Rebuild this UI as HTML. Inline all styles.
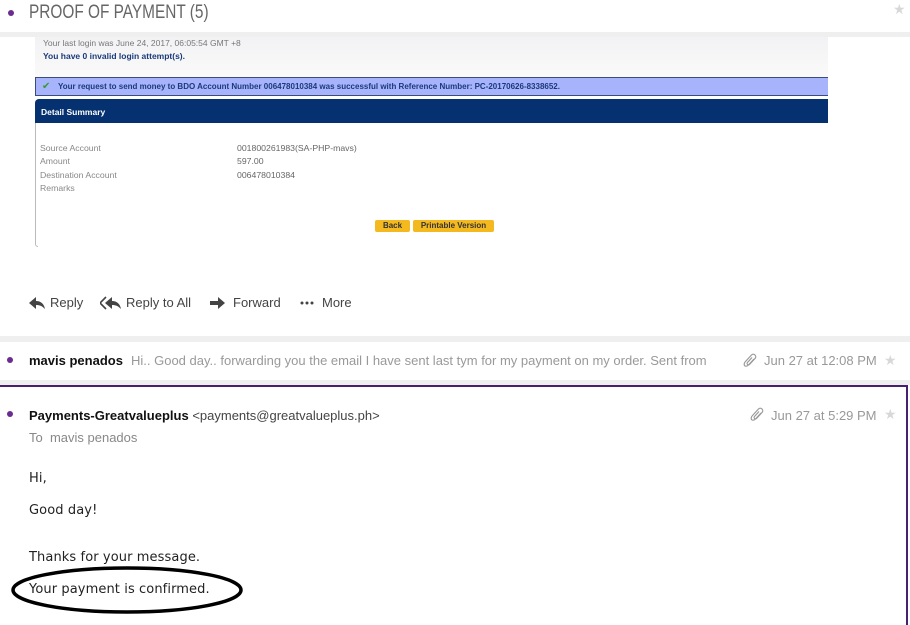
<!DOCTYPE html>
<html><head><meta charset="utf-8"><style>
*{margin:0;padding:0;box-sizing:border-box}
body{width:910px;height:620px;background:#fff;position:relative;overflow:hidden;font-family:"Liberation Sans",sans-serif}
.abs{position:absolute;white-space:nowrap}
.dot{position:absolute;width:6px;height:6px;border-radius:50%;background:#6b2c91}
.star{position:absolute;color:#d8d8d8;font-size:14px}
.sm{font-family:Arial,"Liberation Sans",sans-serif;font-size:8px}
.body{font-family:'DejaVu Sans',sans-serif;font-size:13px;color:#222;letter-spacing:0.1px}
</style></head><body>
<div class="dot" style="left:8px;top:10px"></div>
<div class="abs" style="left:29px;top:2px;font-size:19px;color:#666;transform:scaleX(0.81);transform-origin:left">PROOF OF PAYMENT (5)</div>
<div class="star" style="left:893px;top:1px">★</div>
<div class="abs" style="left:0;top:32px;width:910px;height:5px;background:#efefef"></div>
<div class="abs" style="left:35px;top:37px;width:793px;height:40px;background:linear-gradient(#f2f2f4,#fafafa)"></div>
<div class="abs sm" style="left:43px;top:38px;color:#777;font-size:8.5px">Your last login was June 24, 2017, 06:05:54 GMT +8</div>
<div class="abs sm" style="left:43px;top:51px;color:#1a3a7a;font-weight:bold;font-size:8.5px">You have 0 invalid login attempt(s).</div>
<div class="abs" style="left:35px;top:77px;width:793px;height:19px;background:#a7b4fb;border-top:1px solid #3c4c7a;border-bottom:1px solid #3c4c7a;border-left:1px solid #3c4c7a"></div>
<div class="abs sm" style="left:42px;top:81px;color:#3a9a30;font-size:10px">✔</div>
<div class="abs sm" style="left:58px;top:82px;color:#1a3a7a;font-weight:bold">Your request to send money to BDO Account Number 006478010384 was successful with Reference Number: PC-20170626-8338652.</div>
<div class="abs" style="left:35px;top:99px;width:793px;height:24px;background:#053170;border-radius:4px 0 0 0"></div>
<div class="abs sm" style="left:41px;top:107px;color:#fff;font-weight:bold;font-size:8.5px">Detail Summary</div>
<div class="abs" style="left:35px;top:123px;width:3px;height:124px;border-left:1px solid #bbb;border-bottom:1px solid #bbb;border-radius:0 0 0 4px"></div>
<div class="abs sm" style="left:40px;top:142px;color:#888;line-height:13.3px;font-size:8.7px">Source Account<br>Amount<br>Destination Account<br>Remarks</div>
<div class="abs sm" style="left:237px;top:142px;color:#666;line-height:13.3px;font-size:8.7px">001800261983(SA-PHP-mavs)<br>597.00<br>006478010384</div>
<div class="abs sm" style="left:375px;top:220px;width:35px;height:12px;background:#f5b920;border-radius:2px;text-align:center;line-height:12px;color:#333;font-weight:bold">Back</div>
<div class="abs sm" style="left:413px;top:220px;width:81px;height:12px;background:#f5b920;border-radius:2px;text-align:center;line-height:12px;color:#333;font-weight:bold">Printable Version</div>
<svg class="abs" style="left:28px;top:296px" width="20" height="14" viewBox="0 0 20 14"><path d="M1 7 L8 1 V5 C13 5 16 8 17 13 C14 10 12 9 8 9 V13 Z" fill="#444"/></svg>
<div class="abs" style="left:50px;top:295px;font-size:13px;color:#444">Reply</div>
<svg class="abs" style="left:100px;top:296px" width="24" height="14" viewBox="0 0 24 14"><path d="M6 1 L0 7 L6 13" fill="none" stroke="#444" stroke-width="1.6"/><path d="M5 7 L12 1 V5 C17 5 20 8 21 13 C18 10 16 9 12 9 V13 Z" fill="#444"/></svg>
<div class="abs" style="left:126px;top:295px;font-size:13px;color:#444">Reply to All</div>
<svg class="abs" style="left:210px;top:297px" width="16" height="12" viewBox="0 0 16 12"><path d="M0 4 H8 V0 L15 6 L8 12 V8 H0 Z" fill="#444"/></svg>
<div class="abs" style="left:233px;top:295px;font-size:13px;color:#444">Forward</div>
<svg class="abs" style="left:300px;top:301px" width="14" height="4"><circle cx="2" cy="2" r="1.5" fill="#444"/><circle cx="7" cy="2" r="1.5" fill="#444"/><circle cx="12" cy="2" r="1.5" fill="#444"/></svg>
<div class="abs" style="left:322px;top:295px;font-size:13px;color:#444">More</div>
<div class="abs" style="left:0;top:336px;width:910px;height:6px;background:#efefef"></div>
<div class="dot" style="left:7px;top:357px"></div>
<div class="abs" style="left:29px;top:353px;font-size:13px;color:#111;font-weight:bold">mavis penados</div>
<div class="abs" style="left:131px;top:353px;font-size:13px;color:#999">Hi.. Good day.. forwarding you the email I have sent last tym for my payment on my order. Sent from</div>
<svg class="abs" style="left:743px;top:353px" width="14" height="16" viewBox="0 0 14 16"><path d="M11 6 L5.5 12 C4 13.5 2 13.5 1.5 12.5 C1 11.5 1 10 2.5 8.5 L8.5 2 C9.5 1 11 1 12 2 C13 3 13 4.5 12 5.5 L6.5 11.5 C6 12 5 12 4.5 11.5 C4 11 4 10 4.5 9.5 L9 4.5" fill="none" stroke="#999" stroke-width="1.2"/></svg>
<div class="abs" style="left:764px;top:353px;font-size:13px;color:#999">Jun 27 at 12:08 PM</div>
<div class="star" style="left:884px;top:352px">★</div>
<div class="abs" style="left:0;top:380px;width:910px;height:5px;background:#efefef"></div>
<div class="abs" style="left:-2px;top:385px;width:910px;height:240px;border:2px solid #4a1f72;border-bottom:none"></div>
<div class="dot" style="left:7px;top:411px"></div>
<div class="abs" style="left:29px;top:408px;font-size:13px;color:#111"><b>Payments-Greatvalueplus</b> <span style="color:#444">&lt;payments@greatvalueplus.ph&gt;</span></div>
<svg class="abs" style="left:750px;top:407px" width="14" height="16" viewBox="0 0 14 16"><path d="M11 6 L5.5 12 C4 13.5 2 13.5 1.5 12.5 C1 11.5 1 10 2.5 8.5 L8.5 2 C9.5 1 11 1 12 2 C13 3 13 4.5 12 5.5 L6.5 11.5 C6 12 5 12 4.5 11.5 C4 11 4 10 4.5 9.5 L9 4.5" fill="none" stroke="#999" stroke-width="1.2"/></svg>
<div class="abs" style="left:771px;top:408px;font-size:13px;color:#999">Jun 27 at 5:29 PM</div>
<div class="star" style="left:884px;top:406px">★</div>
<div class="abs" style="left:29px;top:430px;font-size:13px;color:#888">To&nbsp; mavis penados</div>
<div class="abs body" style="left:29px;top:471px">Hi,</div>
<div class="abs body" style="left:29px;top:503px">Good day!</div>
<div class="abs body" style="left:29px;top:550px">Thanks for your message.</div>
<div class="abs body" style="left:29px;top:582px">Your payment is confirmed.</div>
<svg class="abs" style="left:10px;top:565px" width="236" height="52"><ellipse cx="117" cy="25" rx="114" ry="22" fill="none" stroke="#000" stroke-width="3.5"/></svg>
</body></html>
